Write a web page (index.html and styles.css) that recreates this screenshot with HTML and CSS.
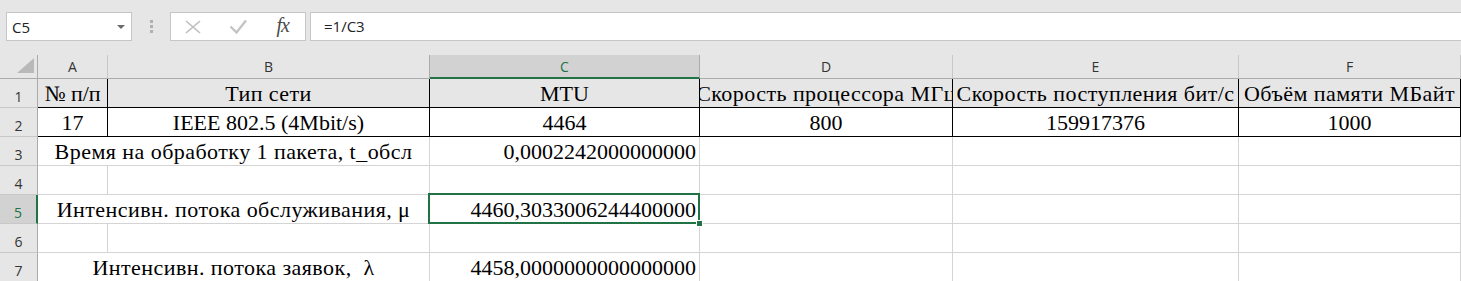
FILE: index.html
```html
<!DOCTYPE html>
<html lang="ru">
<head>
    <meta charset="UTF-8">
    <meta name="viewport" content="width=device-width, initial-scale=1.0">
    <title>Книга1 - Excel</title>
    <link rel="stylesheet" href="styles.css">
</head>
<body>

<!-- formula bar -->
<div class="formula-bar">
  <div class="name-box">
    <span>C5</span>
    <svg width="8" height="4" viewBox="0 0 8 4"><path d="M0 0h8L4 4z" fill="#6b6b6b"/></svg>
  </div>
  <div class="grip"><i></i><i></i><i></i></div>
  <div class="fx-buttons">
    <span class="fx-slot">
      <svg width="16" height="14" viewBox="0 0 16 14"><path d="M1 1L15 13M15 1L1 13" stroke="#bdbdbd" stroke-width="1.6" fill="none"/></svg>
    </span>
    <span class="fx-slot">
      <svg width="18" height="15" viewBox="0 0 18 15"><path d="M1.5 7.5L7.5 13.5L17 1.5" stroke="#c4c4c4" stroke-width="2.4" fill="none"/></svg>
    </span>
    <span class="fx-slot fx">fx</span>
  </div>
  <div class="formula-input">=1/C3</div>
</div>

<!-- sheet -->
<div class="sheet">
  <div class="corner">
    <svg width="38" height="24" viewBox="0 0 38 24"><path d="M34 3L34 18L17 18Z" fill="#b9b9b9"/></svg>
  </div>
  <div class="col-head">A</div>
  <div class="col-head before-sel">B</div>
  <div class="col-head sel">C</div>
  <div class="col-head">D</div>
  <div class="col-head">E</div>
  <div class="col-head">F</div>

  <div class="row-head">1</div>
  <div class="cell bordered grey">№ п/п</div>
  <div class="cell bordered grey ru">Тип сети</div>
  <div class="cell bordered grey">MTU</div>
  <div class="cell bordered grey ru">Скорость процессора МГц</div>
  <div class="cell bordered grey ru">Скорость поступления бит/с</div>
  <div class="cell bordered grey ru">Объём памяти МБайт</div>

  <div class="row-head">2</div>
  <div class="cell bordered">17</div>
  <div class="cell bordered">IEEE 802.5 (4Mbit/s)</div>
  <div class="cell bordered">4464</div>
  <div class="cell bordered">800</div>
  <div class="cell bordered">159917376</div>
  <div class="cell bordered">1000</div>

  <div class="row-head">3</div>
  <div class="cell span2 ru">Время на обработку 1 пакета, t_обсл</div>
  <div class="cell num">0,0002242000000000</div>
  <div class="cell"></div>
  <div class="cell"></div>
  <div class="cell"></div>

  <div class="row-head">4</div>
  <div class="cell"></div>
  <div class="cell"></div>
  <div class="cell"></div>
  <div class="cell"></div>
  <div class="cell"></div>
  <div class="cell"></div>

  <div class="row-head sel">5</div>
  <div class="cell span2 ru">Интенсивн. потока обслуживания, μ</div>
  <div class="cell num selected">4460,3033006244400000</div>
  <div class="cell"></div>
  <div class="cell"></div>
  <div class="cell"></div>

  <div class="row-head">6</div>
  <div class="cell"></div>
  <div class="cell"></div>
  <div class="cell"></div>
  <div class="cell"></div>
  <div class="cell"></div>
  <div class="cell"></div>

  <div class="row-head">7</div>
  <div class="cell span2 ru">Интенсивн. потока заявок,&nbsp; λ</div>
  <div class="cell num">4458,0000000000000000</div>
  <div class="cell"></div>
  <div class="cell"></div>
  <div class="cell"></div>
</div>

</body>
</html>
```

FILE: styles.css
```css
body { margin: 0; background: #fff; overflow: hidden; font-family: "Liberation Serif", "Times New Roman", serif; }

/* formula bar */
.formula-bar {
  display: flex;
  align-items: flex-start;
  height: 55px;
  box-sizing: border-box;
  padding: 12px 0 0 6px;
  background: #e6e6e6;
  font-family: "Open Sans", sans-serif;
  font-size: 15px;
  color: #222;
}
.name-box {
  width: 126px;
  height: 29px;
  box-sizing: border-box;
  border: 1px solid #c6c6c6;
  background: #fff;
  display: flex;
  align-items: center;
  justify-content: space-between;
  padding: 0 6px 0 5px;
}
.grip {
  width: 38px;
  height: 29px;
  display: flex;
  flex-direction: column;
  align-items: center;
  justify-content: center;
  gap: 2px;
}
.grip i { display: block; width: 3px; height: 3px; background: #b0b0b0; }
.fx-buttons {
  width: 136px;
  height: 29px;
  box-sizing: border-box;
  border: 1px solid #c6c6c6;
  background: #fff;
  display: flex;
}
.fx-slot { flex: 1; display: flex; align-items: center; justify-content: center; }
.fx {
  font-family: "Liberation Serif", serif;
  font-style: italic;
  font-size: 20px;
  color: #4a4a4a;
  letter-spacing: -1px;
  padding-bottom: 2px;
}
.formula-input {
  flex: 1;
  margin-left: 4px;
  height: 29px;
  box-sizing: border-box;
  border: 1px solid #c6c6c6;
  border-right: none;
  background: #fff;
  padding-left: 13px;
  line-height: 27px;
}

/* sheet grid */
.sheet {
  display: grid;
  grid-template-columns: 38px 70px 322px 270px 253px 286px 222px;
  grid-template-rows: 24px repeat(7, 29px);
}
.corner { background: #e6e6e6; border-right: 1px solid #ababab; border-bottom: 1px solid #ababab; box-sizing: border-box; }
.corner svg { display: block; }

.col-head, .row-head {
  box-sizing: border-box;
  background: #e6e6e6;
  font-family: "Open Sans", sans-serif;
  font-size: 14px;
  line-height: 19px;
  color: #333;
  display: flex;
  justify-content: center;
}
.col-head { align-items: center; border-right: 1px solid #c8c8c8; border-bottom: 1px solid #ababab; }
.col-head.before-sel { border-right-color: #ababab; }
.col-head.sel { background: #d2d2d2; color: #217346; border-right-color: #ababab; border-bottom: 2px solid #217346; }
.row-head { align-items: flex-end; padding-bottom: 1px; border-right: 1px solid #ababab; border-bottom: 1px solid #c8c8c8; }
.row-head.sel { background: #d2d2d2; color: #217346; border-right: 2px solid #217346; }

.cell {
  box-sizing: border-box;
  border-right: 1px solid #d4d4d4;
  border-bottom: 1px solid #d4d4d4;
  display: flex;
  align-items: flex-end;
  justify-content: center;
  padding-bottom: 1px;
  overflow: hidden;
  white-space: nowrap;
  font-size: 22px;
  line-height: 24px;
  color: #000;
}
.cell.span2 { grid-column: span 2; }
.cell.num { justify-content: flex-end; padding-right: 3px; }
.cell.ru { letter-spacing: 0.45px; }
.cell.bordered { border-color: #000; }
.cell.grey { background: #e7e6e6; }

/* active cell frame + fill handle */
.cell.selected { position: relative; overflow: visible; }
.cell.selected::after {
  content: "";
  position: absolute;
  left: -2px; top: -2px; right: -1px; bottom: -1px;
  border: 2px solid #217346;
}
.cell.selected::before {
  content: "";
  position: absolute;
  right: -4px; bottom: -4px;
  width: 5px; height: 5px;
  background: #217346;
  border: 1px solid #fff;
  z-index: 2;
}
```
